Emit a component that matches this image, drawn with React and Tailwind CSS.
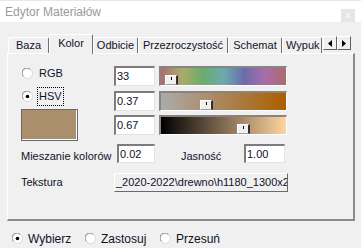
import React from 'react';

const Radio = ({ checked }) => (
  <svg width="11" height="11" viewBox="0 0 11 11" className="shrink-0">
    <circle cx="5.5" cy="5.5" r="5" fill="#ffffff" stroke="#d8d8d8" />
    <path d="M1.4 8.2 A4.8 4.8 0 0 1 8.2 1.4" fill="none" stroke="#8a8a8a" strokeWidth="1" />
    {checked && <circle cx="5.5" cy="5.5" r="1.8" fill="#000000" />}
  </svg>
);

const Tab = ({ label, w, active, clip }) => (
  <div
    className={`${w} ${active ? 'h-[20px] bg-[#f0f0f0] -mb-[1px] pb-[3px] relative z-10' : 'h-[16px]'} border-t border-l border-white border-r border-r-[#6f6f6f] rounded-t-[2px] flex items-center ${clip ? 'justify-start pl-[3px] overflow-hidden' : 'justify-center'} text-[11px] leading-none whitespace-nowrap`}
  >
    {label}
  </div>
);

const Field = ({ value, w }) => (
  <div className={`${w} h-full bg-white border-t-2 border-l-2 border-t-[#7c7c7c] border-l-[#7c7c7c] border-r border-b border-r-[#e3e3e3] border-b-[#e3e3e3] pl-[1px] flex items-center text-[11px] leading-none`}>
    {value}
  </div>
);

const Slider = ({ gradient, thumb }) => (
  <div className="relative w-[128px] h-full border-t-2 border-l-2 border-t-[#858585] border-l-[#858585] border-r border-b border-r-white border-b-white">
    <div className={`w-full h-full ${gradient}`} />
    <div className={`absolute bottom-0 ${thumb} w-[13px] h-[10px] bg-[#f0f0f0] border-t border-l border-white border-r-2 border-b border-r-[#303030] border-b-[#a0a0a0] flex justify-center`}>
      <div className="w-[1px] h-[3px] mt-[1px] bg-black" />
    </div>
  </div>
);

export default function App() {
  return (
    <div className="w-[361px] h-[248px] overflow-hidden bg-[#f0f0f0] text-[#10102a] font-['Liberation_Sans',Arial,sans-serif]">
      {/* Title bar */}
      <div className="h-[22px] bg-white flex items-start justify-between border-t border-[#e8e8e8]">
        <span className="pl-[5px] pt-[4px] text-[12px] leading-[15px] text-[#9a9a9a]">Edytor Materiałów</span>
        <div className="mt-[8px] mr-[6px] w-[14px] h-[13px] bg-[#e6e6e6] flex items-center justify-center text-[9px] leading-none text-white">x</div>
      </div>

      {/* Tabs */}
      <div className="pt-[11px] pl-[8px] flex items-end h-[31px]">
        <Tab label="Baza" w="w-[41px]" />
        <Tab label="Kolor" w="w-[44px]" active />
        <Tab label="Odbicie" w="w-[45px]" />
        <Tab label="Przezroczystość" w="w-[90px]" />
        <Tab label="Schemat" w="w-[54px]" />
        <Tab label="Wypuk" w="w-[40px]" clip />
        <div className="flex self-start mt-[3px] ml-[1px]">
          <div className="w-[14px] h-[14px] bg-[#f0f0f0] border-t border-l border-white border-r border-b border-r-[#606060] border-b-[#606060] flex items-center justify-center">
            <svg width="4" height="7" viewBox="0 0 4 7"><polygon points="4,0 4,7 0,3.5" fill="#000" /></svg>
          </div>
          <div className="w-[14px] h-[14px] bg-[#f0f0f0] border-t border-l border-white border-r border-b border-r-[#606060] border-b-[#606060] flex items-center justify-center">
            <svg width="4" height="7" viewBox="0 0 4 7"><polygon points="0,0 0,7 4,3.5" fill="#000" /></svg>
          </div>
        </div>
      </div>

      {/* Panel */}
      <div className="ml-[7px] w-[348px] h-[168px] border-t border-l border-white border-r-2 border-b-2 border-r-[#8a8a8a] border-b-[#8a8a8a] pl-[13px] pt-[12px]">
        <div className="flex h-[75px]">
          <div className="w-[93px] flex flex-col">
            <div className="mt-[2px] h-[11px] ml-[1px] flex items-center gap-[6px] text-[11px] leading-none">
              <Radio />
              <span>RGB</span>
            </div>
            <div className="mt-[12px] h-[11px] ml-[1px] flex items-center gap-[4px] text-[11px] leading-none">
              <Radio checked />
              <span className="border border-dotted border-black px-[1px] py-[3px]">HSV</span>
            </div>
            <div className="mt-[7px] w-[57px] h-[32px] bg-[#ab8f6c] border border-[#6a6a6a] shadow-[inset_-1px_-1px_0_#ffffff]" />
          </div>
          <div className="flex flex-col">
            <div className="flex h-[20px] gap-[4px]">
              <Field value="33" w="w-[41px]" />
              <Slider
                gradient="bg-[linear-gradient(to_right,#ab6c6c,#abab6c,#6cab6c,#6cabab,#6c6cab,#ab6cab,#ab6c6c)]"
                thumb="left-[4px]"
              />
            </div>
            <div className="flex h-[20px] gap-[4px] mt-[5px]">
              <Field value="0.37" w="w-[41px]" />
              <Slider gradient="bg-[linear-gradient(to_right,#ababab,#ab5e00)]" thumb="left-[39px]" />
            </div>
            <div className="flex h-[20px] gap-[4px] mt-[4px]">
              <Field value="0.67" w="w-[41px]" />
              <Slider gradient="bg-[linear-gradient(to_right,#000000,#ffd5a1)]" thumb="left-[76px]" />
            </div>
          </div>
        </div>

        <div className="mt-[3px] h-[19px] flex items-center text-[11px] leading-none">
          <span className="w-[96px] pt-[6px]">Mieszanie kolorów</span>
          <Field value="0.02" w="w-[38px]" />
          <span className="ml-[26px] w-[63px] pt-[6px]">Jasność</span>
          <Field value="1.00" w="w-[41px]" />
        </div>

        <div className="mt-[10px] h-[19px] flex items-center text-[11px] leading-none">
          <span className="w-[93px]">Tekstura</span>
          <div className="w-[174px] h-full bg-[#f0f0f0] border-t border-l border-white border-r border-b border-r-[#6a6a6a] border-b-[#6a6a6a] overflow-hidden whitespace-nowrap flex items-center pl-[1px]">
            _2020-2022\drewno\h1180_1300x2
          </div>
        </div>
      </div>

      {/* Bottom radios */}
      <div className="pt-[12px] pl-[12px] flex items-center h-[23px] text-[12px] leading-none">
        <div className="w-[73px] flex items-center gap-[5px]">
          <Radio checked />
          <span>Wybierz</span>
        </div>
        <div className="w-[75px] flex items-center gap-[5px]">
          <Radio />
          <span>Zastosuj</span>
        </div>
        <div className="flex items-center gap-[5px]">
          <Radio />
          <span>Przesuń</span>
        </div>
      </div>
    </div>
  );
}
